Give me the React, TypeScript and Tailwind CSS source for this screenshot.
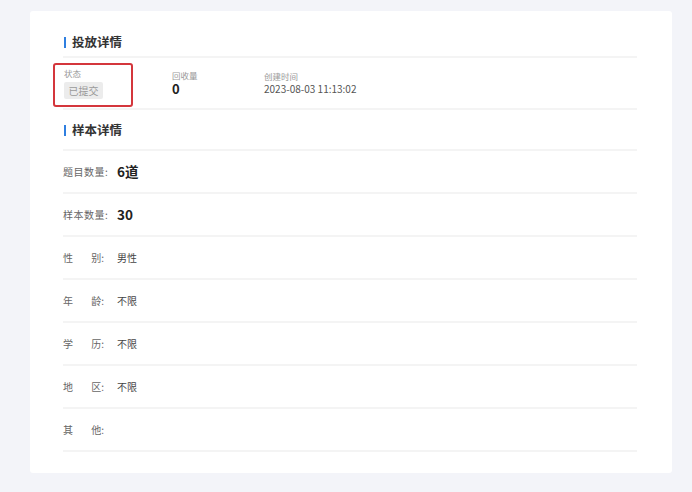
const font = { fontFamily: '"Noto Sans CJK SC", "Noto Sans", sans-serif' };

type Row = { label: string[]; value: string; big?: boolean };

const rows: Row[] = [
  { label: ['题目数量:'], value: '6道', big: true },
  { label: ['样本数量:'], value: '30', big: true },
  { label: ['性', '别:'], value: '男性' },
  { label: ['年', '龄:'], value: '不限' },
  { label: ['学', '历:'], value: '不限' },
  { label: ['地', '区:'], value: '不限' },
  { label: ['其', '他:'], value: '' },
];

function SectionTitle({ text, className }: { text: string; className: string }) {
  return (
    <div className={`flex items-center border-b-2 border-[#f4f4f4] ${className}`}>
      <span className="ml-[1px] mr-[6px] h-[11px] w-[2px] bg-[#2f7fe0]" />
      <span className="text-[12.5px] font-bold text-[#333]">{text}</span>
    </div>
  );
}

export default function App() {
  return (
    <div className="min-h-[492px] bg-[#f3f4f9] pt-[11px] pl-[30px]" style={font}>
      <div className="h-[462px] w-[642px] rounded-[3px] bg-white pt-[20px] pl-[33px] pr-[35px]">
        <SectionTitle text="投放详情" className="h-[27px] pb-[2px]" />

        <div className="flex h-[52px] border-b-2 border-[#f4f4f4]">
          <div className="relative w-[109px] pl-[1px] pt-[9px]">
            <div className="absolute left-[-10px] top-[5px] h-[44px] w-[80px] rounded-[3px] border-2 border-[#d4363c]" />
            <div className="text-[8.5px] leading-[12px] text-[#999]">状态</div>
            <div className="mt-[3px] flex h-[17px] w-[39px] items-center justify-center rounded-[2px] bg-[#ececec] text-[10px] text-[#9a9a9a]">
              已提交
            </div>
          </div>
          <div className="w-[92px] pt-[11px]">
            <div className="text-[8.5px] leading-[12px] text-[#999]">回收量</div>
            <div className="mt-[1px] text-[13px] font-bold leading-[14px] text-[#222]">0</div>
          </div>
          <div className="pt-[12px]">
            <div className="text-[8.5px] leading-[12px] text-[#999]">创建时间</div>
            <div className="text-[10px] leading-[14px] text-[#555]">2023-08-03 11:13:02</div>
          </div>
        </div>

        <SectionTitle text="样本详情" className="h-[41px] pt-[1px]" />

        {rows.map((r) => (
          <div key={r.label.join('')} className="flex h-[43px] items-center border-b-2 border-[#f4f4f4]">
            <div className="w-[54px] text-[10px] text-[#666]">
              {r.label.length === 1 ? (
                <span className="tracking-[0.5px]">{r.label[0]}</span>
              ) : (
                <div className="flex w-[41px] justify-between">
                  <span>{r.label[0]}</span>
                  <span>{r.label[1]}</span>
                </div>
              )}
            </div>
            {r.big ? (
              <span className="text-[13.5px] font-bold text-[#222]">{r.value}</span>
            ) : (
              <span className="text-[10px] text-[#444]">{r.value}</span>
            )}
          </div>
        ))}
      </div>
    </div>
  );
}
